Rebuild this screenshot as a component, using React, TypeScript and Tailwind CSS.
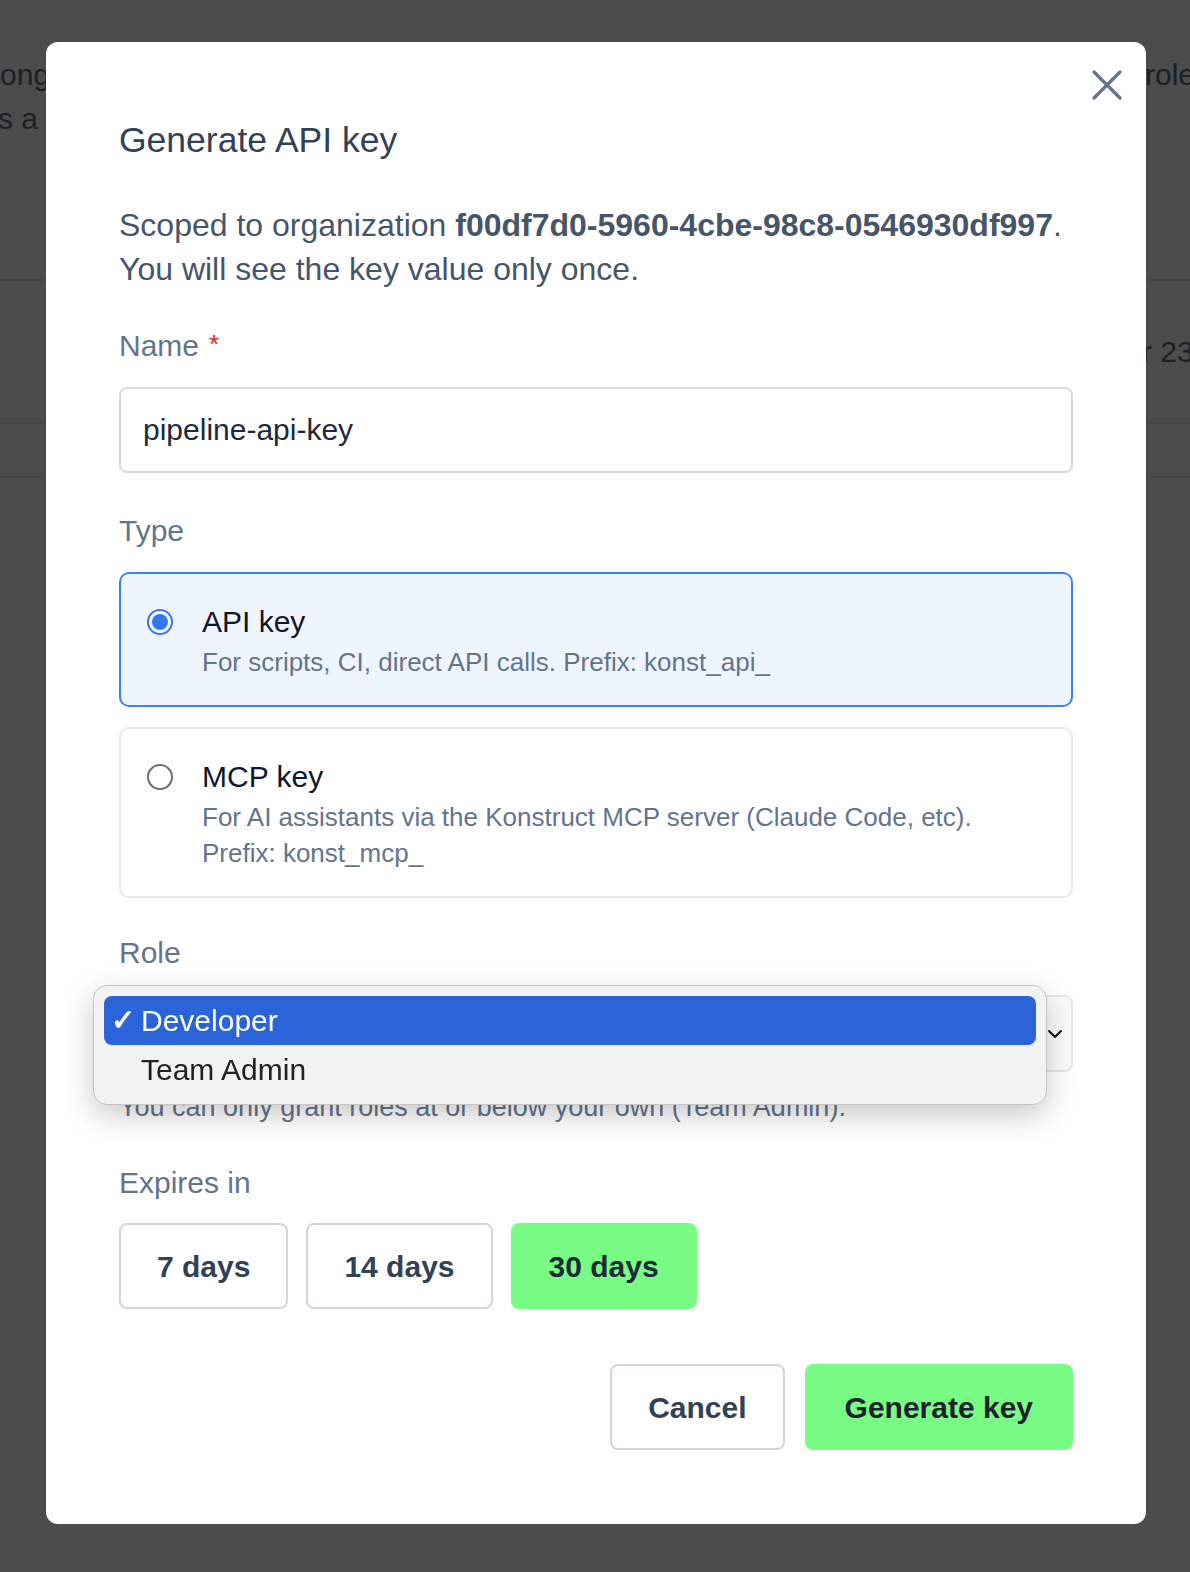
import React, { useState } from 'react';

type KeyType = 'api' | 'mcp';

const EXPIRY_OPTIONS = [7, 14, 30];
const ROLES = ['Developer', 'Team Admin'];

const Radio: React.FC<{ checked: boolean }> = ({ checked }) =>
  checked ? (
    <span className="mt-[9px] flex h-[26px] w-[26px] shrink-0 items-center justify-center rounded-full border-[2.5px] border-[#3478f6] bg-white">
      <span className="h-[16px] w-[16px] rounded-full bg-[#3478f6]" />
    </span>
  ) : (
    <span className="mt-[9px] h-[26px] w-[26px] shrink-0 rounded-full border-2 border-[#6e6e6e] bg-white" />
  );

const TypeCard: React.FC<{
  checked: boolean;
  title: string;
  lines: string[];
  onSelect: () => void;
}> = ({ checked, title, lines, onSelect }) => (
  <button
    type="button"
    onClick={onSelect}
    className={`flex w-full items-start gap-[29px] rounded-[10px] border-2 px-[26px] pb-[25px] pt-[26px] text-left ${
      checked ? 'border-[#3b82f6] bg-[#eff5ff]' : 'border-[#e2e8f0] bg-white'
    }`}
  >
    <Radio checked={checked} />
    <div className="flex flex-col">
      <span className="text-[30px] leading-[44px] text-[#0f172a]">{title}</span>
      {lines.map((l) => (
        <span key={l} className="text-[26px] leading-[36px] text-[#64748b]">
          {l}
        </span>
      ))}
    </div>
  </button>
);

export default function App() {
  const [name, setName] = useState('pipeline-api-key');
  const [keyType, setKeyType] = useState<KeyType>('api');
  const [role, setRole] = useState('Developer');
  const [expiry, setExpiry] = useState(30);

  return (
    <div className="relative min-h-screen w-full overflow-hidden bg-white font-['Liberation_Sans',Arial,sans-serif] text-[30px] text-[#5f6b82]">
      {/* page underneath the dialog */}
      <div className="pt-[53px]">
        <div className="flex h-[44px] items-center justify-between leading-[44px]">
          <span className="-ml-[40px] whitespace-nowrap">belong to your organization</span>
          <span className="w-[45px] whitespace-nowrap">roles</span>
        </div>
        <div className="flex h-[44px] items-center leading-[44px]">
          <span className="-ml-[2px] whitespace-nowrap">s a key is revoked</span>
        </div>
        <div className="h-[140px] border-b-2 border-gray-200" />
        <div className="flex h-[143px] items-center justify-end border-b-2 border-gray-200">
          <span className="w-[48px] whitespace-nowrap">r 23</span>
        </div>
        <div className="h-[54px] border-b-2 border-gray-200" />
      </div>

      {/* dialog overlay */}
      <div className="fixed inset-0 flex justify-center bg-black/70 pt-[42px]">
        <div className="relative ml-[2px] h-fit w-[1100px] rounded-[12px] bg-white px-[73px] pb-[74px] pt-[73px]">
          <button type="button" className="absolute right-[23px] top-[27px] text-[#64748b]">
            <svg width="32" height="32" viewBox="0 0 32 32" fill="none" stroke="currentColor" strokeWidth="3.2" strokeLinecap="round">
              <path d="M3 3 L29 29 M29 3 L3 29" />
            </svg>
          </button>

          <h2 className="text-[35.5px] leading-[50px] text-[#334155]">Generate API key</h2>

          <p className="mt-[38px] text-[32px] leading-[44px] text-[#475569]">
            Scoped to organization <b className="font-bold">f00df7d0-5960-4cbe-98c8-0546930df997</b>.
            <br />
            You will see the key value only once.
          </p>

          {/* name */}
          <label className="mt-[33px] flex h-[44px] items-start leading-[44px] text-[#64748b]">
            Name
            <span className="ml-[10px] text-[26px] leading-[40px] text-[#dc2626]">*</span>
          </label>
          <input
            value={name}
            onChange={(e) => setName(e.target.value)}
            className="mt-[19px] h-[86px] w-full rounded-[8px] border-2 border-[#d5d9e0] px-[22px] text-[30px] text-[#1e293b] outline-none"
          />

          {/* type */}
          <div className="mt-[36px] h-[44px] leading-[44px] text-[#64748b]">Type</div>
          <div className="mt-[19px] flex flex-col gap-[20px]">
            <TypeCard
              checked={keyType === 'api'}
              title="API key"
              lines={['For scripts, CI, direct API calls. Prefix: konst_api_']}
              onSelect={() => setKeyType('api')}
            />
            <TypeCard
              checked={keyType === 'mcp'}
              title="MCP key"
              lines={['For AI assistants via the Konstruct MCP server (Claude Code, etc).', 'Prefix: konst_mcp_']}
              onSelect={() => setKeyType('mcp')}
            />
          </div>

          {/* role */}
          <div className="mt-[33px] h-[44px] leading-[44px] text-[#64748b]">Role</div>
          <div className="relative mt-[20px]">
            <div className="flex h-[77px] w-full items-center justify-between rounded-[8px] border-2 border-[#e2e8f0] bg-[#fbfbfb] pl-[22px] pr-[8px]">
              <span className="text-[#0f172a]">{role}</span>
              <svg width="16" height="12" viewBox="0 0 16 12" fill="none" stroke="#111" strokeWidth="2" strokeLinecap="round" strokeLinejoin="round">
                <path d="M2 3 L8 9 L14 3" />
              </svg>
            </div>

            {/* open native menu */}
            <div className="absolute -left-[26px] -top-[10px] w-[954px] rounded-[14px] border border-[#c4c4c4] bg-[#f2f2f2] p-[10px] shadow-[0_10px_30px_rgba(0,0,0,0.22)]">
              {ROLES.map((r) => {
                const active = r === role;
                return (
                  <div
                    key={r}
                    onClick={() => setRole(r)}
                    className={`flex h-[49px] items-center rounded-[8px] ${
                      active ? 'bg-[#2b63d9] text-white' : 'text-[#222222]'
                    }`}
                  >
                    <span className="w-[37px] pl-[7px] text-[29px] font-bold leading-none">{active ? '✓' : ''}</span>
                    <span className="text-[30px]">{r}</span>
                  </div>
                );
              })}
            </div>
          </div>
          <p className="mt-[17px] text-[27px] leading-[36px] text-[#64748b]">
            You can only grant roles at or below your own (Team Admin).
          </p>

          {/* expiry */}
          <div className="mt-[36px] h-[44px] leading-[44px] text-[#64748b]">Expires in</div>
          <div className="mt-[18px] flex gap-[18px]">
            {EXPIRY_OPTIONS.map((d) => (
              <button
                key={d}
                type="button"
                onClick={() => setExpiry(d)}
                className={`h-[86px] rounded-[8px] border-2 px-[36px] text-[30px] font-bold ${
                  expiry === d
                    ? 'border-[#78fc84] bg-[#78fc84] text-[#1e293b]'
                    : 'border-[#cfd6e2] bg-white text-[#334155]'
                }`}
              >
                {d} days
              </button>
            ))}
          </div>

          {/* footer */}
          <div className="mt-[55px] flex justify-end gap-[20px]">
            <button
              type="button"
              className="h-[86px] rounded-[8px] border-2 border-[#cfd6e2] bg-white px-[36px] text-[30px] font-bold text-[#334155]"
            >
              Cancel
            </button>
            <button
              type="button"
              className="h-[86px] rounded-[8px] border-2 border-[#78fc84] bg-[#78fc84] px-[38px] text-[30px] font-bold text-[#1e2230]"
            >
              Generate key
            </button>
          </div>
        </div>
      </div>
    </div>
  );
}
